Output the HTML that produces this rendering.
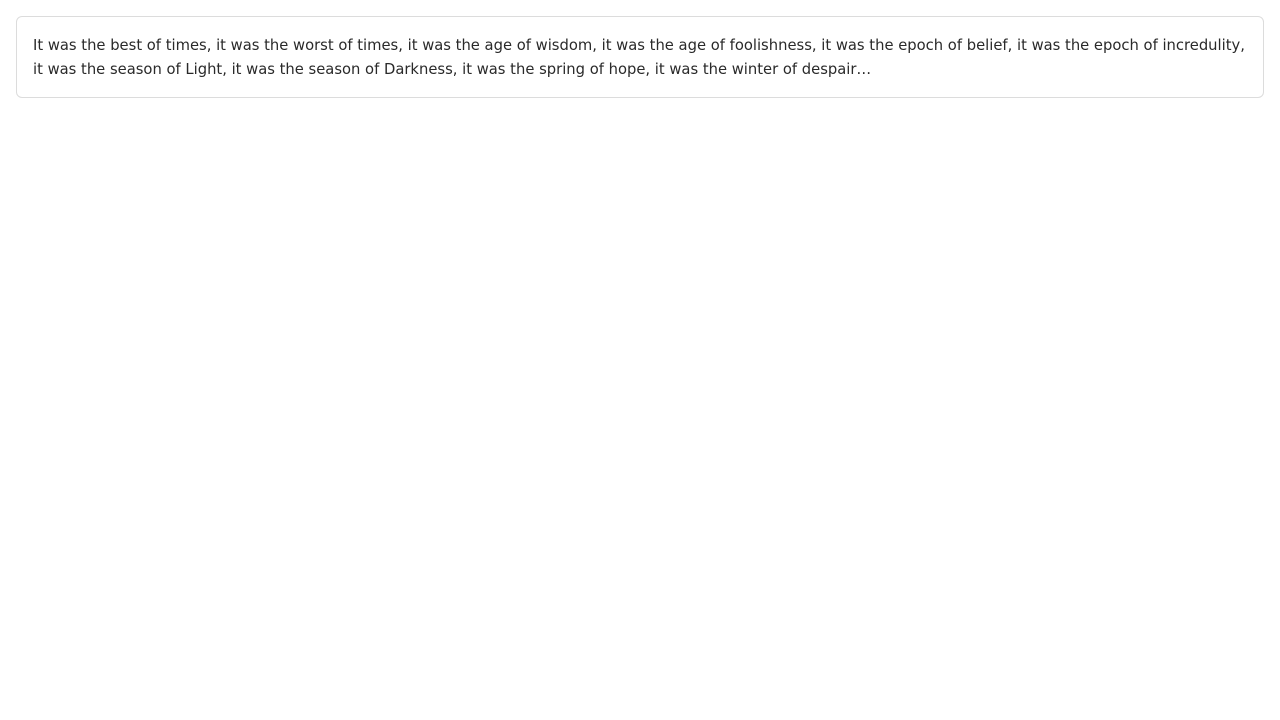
<!DOCTYPE html>
<html><head><style>
html,body{margin:0;padding:0;background:#fff;}
.box{position:absolute;left:16px;top:16px;width:1248px;height:82px;border:1px solid #dcdcdc;border-radius:6px;box-sizing:border-box;}
.t{position:absolute;left:33px;top:34px;font-family:"DejaVu Sans","Liberation Sans",sans-serif;font-size:14.75px;line-height:24px;color:#2a2a2a;white-space:nowrap;}
</style></head><body>
<div class="box"></div>
<div class="t">It was the best of times, it was the worst of times, it was the age of wisdom, it was the age of foolishness, it was the epoch of belief, it was the epoch of incredulity,<br>it was the season of Light, it was the season of Darkness, it was the spring of hope, it was the winter of despair…</div>
</body></html>
